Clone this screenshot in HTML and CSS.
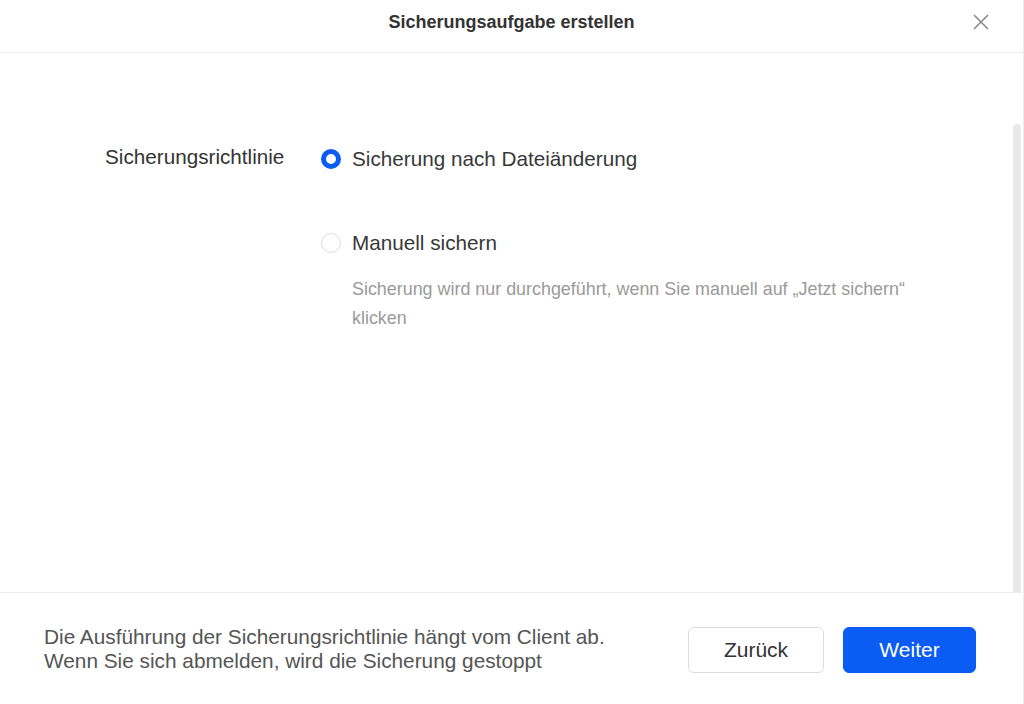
FILE: index.html
```html
<!DOCTYPE html>
<html lang="de">
<head>
    <meta charset="UTF-8">
    <title>Sicherungsaufgabe erstellen</title>
    <link rel="stylesheet" href="styles.css">
</head>
<body>
    <div class="dialog">
        <div class="dialog-header">
            <h1>Sicherungsaufgabe erstellen</h1>
            <button class="close" aria-label="Schließen">
                <svg width="16" height="16" viewBox="0 0 16 16">
                    <path d="M1 1 L15 15 M15 1 L1 15" stroke="#8a8a8a" stroke-width="1.6" fill="none"/>
                </svg>
            </button>
        </div>
        <div class="dialog-body">
            <div class="field">
                <div class="field-label">Sicherungsrichtlinie</div>
                <div class="options">
                    <label class="option checked">
                        <span class="radio"></span>
                        <span class="option-text">Sicherung nach Dateiänderung</span>
                    </label>
                    <label class="option">
                        <span class="radio"></span>
                        <span class="option-text">Manuell sichern</span>
                    </label>
                    <p class="hint">Sicherung wird nur durchgeführt, wenn Sie manuell auf „Jetzt sichern“ klicken</p>
                </div>
            </div>
            <div class="scroll-thumb"></div>
        </div>
        <div class="dialog-footer">
            <p class="note">Die Ausführung der Sicherungsrichtlinie hängt vom Client ab.<br>Wenn Sie sich abmelden, wird die Sicherung gestoppt</p>
            <div class="actions">
                <button class="btn">Zurück</button>
                <button class="btn primary">Weiter</button>
            </div>
        </div>
    </div>
</body>
</html>
```

FILE: styles.css
```css
body {
    margin: 0;
    font-family: "Liberation Sans", Arial, sans-serif;
    background: #fff;
    color: #333;
}
.dialog {
    height: 704px;
    display: flex;
    flex-direction: column;
    border-right: 1px solid #ececec;
    box-sizing: border-box;
}
.dialog-header {
    height: 53px;
    box-sizing: border-box;
    padding-top: 11px;
    border-bottom: 1px solid #ededed;
    display: flex;
    justify-content: center;
    position: relative;
}
.dialog-header h1 {
    margin: 0;
    font-size: 18px;
    line-height: 22px;
    font-weight: bold;
    color: #333;
}
.close {
    position: absolute;
    right: 34px;
    top: 14px;
    background: none;
    border: 0;
    padding: 0;
    width: 16px;
    height: 16px;
}
.dialog-body {
    flex: 1;
    position: relative;
    padding-top: 92px;
}
.scroll-thumb {
    position: absolute;
    right: 2px;
    top: 71px;
    bottom: 0;
    width: 8px;
    background: #e8e8e8;
    border-radius: 4px 4px 0 0;
}
.field {
    display: flex;
    padding-left: 105px;
}
.field-label {
    width: 216px;
    font-size: 20.7px;
    line-height: 24px;
}
.options {
    display: flex;
    flex-direction: column;
    padding-top: 1px;
}
.option {
    display: flex;
    align-items: center;
    height: 26px;
    font-size: 20.7px;
    color: #383838;
}
.option + .option {
    margin-top: 58px;
}
.radio {
    width: 20px;
    height: 20px;
    box-sizing: border-box;
    border: 1px solid #dcdcdc;
    border-radius: 50%;
    margin-right: 11px;
}
.option.checked .radio {
    border: 5px solid #0a5cf5;
}
.hint {
    margin: 19px 0 0 31px;
    width: 560px;
    font-size: 17.9px;
    line-height: 29px;
    color: #9a9a9a;
}
.dialog-footer {
    height: 111px;
    border-top: 1px solid #ededed;
    display: flex;
    align-items: center;
    justify-content: space-between;
    padding: 0 47px 0 44px;
}
.note {
    margin: 0;
    font-size: 20.8px;
    line-height: 24px;
    color: #555;
}
.actions {
    display: flex;
    gap: 19px;
    margin-top: 3px;
}
.btn {
    width: 136px;
    height: 46px;
    border: 1px solid #dcdcdc;
    border-radius: 6px;
    background: #fff;
    font-family: "Liberation Sans", Arial, sans-serif;
    font-size: 21px;
    color: #333;
}
.btn.primary {
    width: 133px;
    background: #0a5cf5;
    border-color: #0a5cf5;
    color: #fff;
}
```
